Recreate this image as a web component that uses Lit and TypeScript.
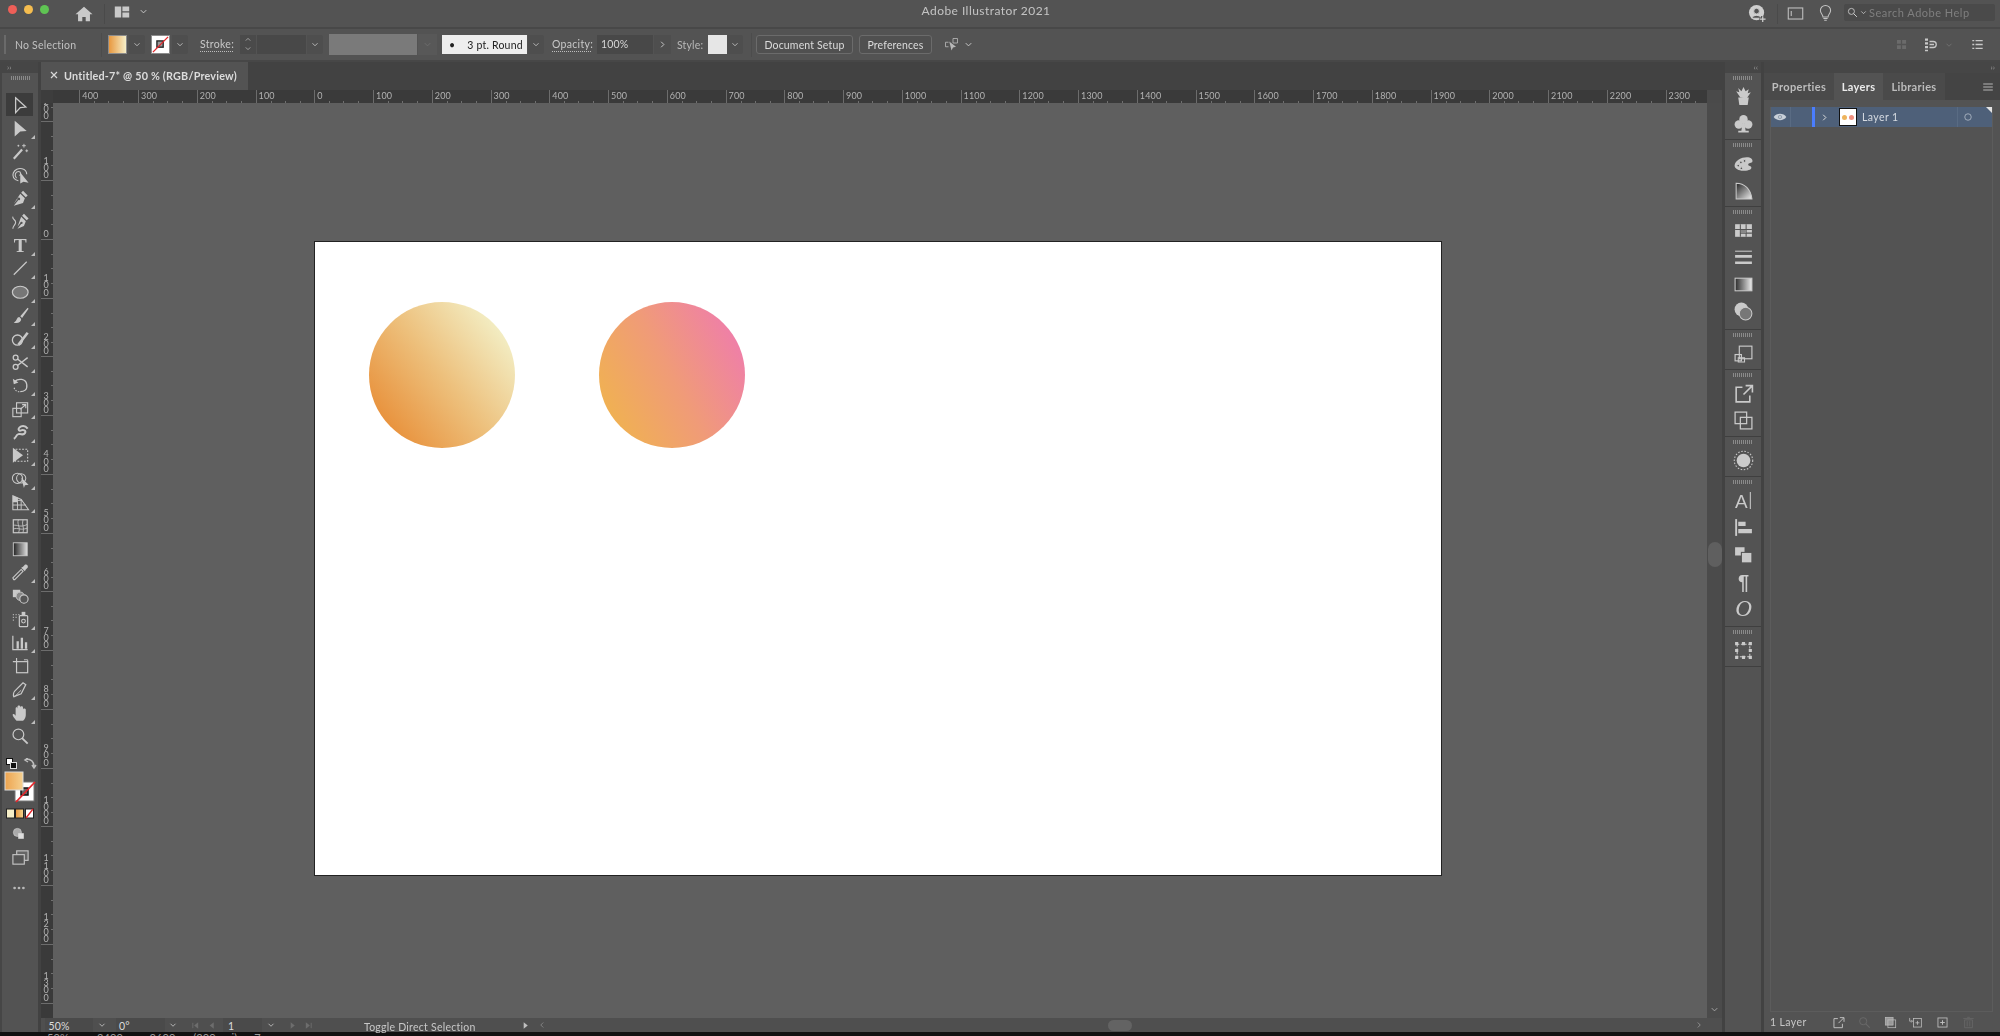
import { LitElement, html, css, svg } from 'lit';
import { customElement } from 'lit/decorators.js';

const cc = 'currentColor';

// all icons are drawn on a 20x20 box
const I: Record<string, unknown> = {
  select: svg`<path d="M5 2l11 10-6 .6L5 18z" fill="none" stroke-width="1.4"/>`,
  direct: svg`<path d="M4 2l13 11-7 .5L4 19z" fill=${cc} stroke="none"/>`,
  wand: svg`<path d="M3 18L12 8" stroke-width="2.4"/><path d="M14 2v4M12 4h4M17 8v3M15.5 9.5h3M8 3v2M7 4h2" stroke-width="1"/>`,
  curve: svg`<path d="M8 16C3 15 1 11 2.500 7.500S8 2 12 3s5 4 5 6" stroke-width="1.200"/><path d="M6 13C3 10 5 6 8 6s3 4 1 4" stroke-width="1.200"/><path d="M10 7l9 11-5.500-1L10 19z" fill=${cc} stroke="none"/>`,
  pen: svg`<path d="M13 2l5 5-2 2-5-5zM10 5l5 5-2 5-10 3 5-6a1.500 1.500 0 1 0-1-1L3 16z" fill=${cc} stroke="none"/>`,
  curvePen: svg`<path d="M14 2l5 5-2 2-5-5zM11 5l5 5-2 5-7 3 4-5a1.300 1.300 0 1 0-1-1l-3 4z" fill=${cc} stroke="none"/><path d="M2 5c-1 3 3 3 3 6s-3 4-3 7" stroke-width="1.200"/>`,
  type: svg`<text x="10" y="17" text-anchor="middle" class="gl serif-b" font-size="21">T</text>`,
  line: svg`<path d="M3 17L17 3" stroke-width="1.300"/>`,
  ellipse: svg`<ellipse cx="10" cy="10" rx="8.500" ry="6.500" fill="#777" stroke-width="1.300"/>`,
  brush: svg`<path d="M18 2l-8 9 2 2 7-10zM9 12c-3 0-2 4-6 6 4 1 8 0 8-4z" fill=${cc} stroke="none"/>`,
  shaper: svg`<circle cx="7" cy="12" r="5.500" stroke-width="1.400"/><path d="M18 4L8 17" stroke-width="2.800"/>`,
  scissors: svg`<circle cx="5" cy="5" r="2.600" stroke-width="1.400"/><circle cx="5" cy="15" r="2.600" stroke-width="1.400"/><path d="M7 6.500L18 15M7 13.500L18 5" stroke-width="1.500"/>`,
  rotate: svg`<path d="M4 6c4-4 12-3 13 3s-3 8-7 8" stroke-width="1.400"/><path d="M2 3l1 6 5-2z" fill=${cc} stroke="none"/><path d="M9 17c-3 0-5-2-6-5" stroke-width="1.200" stroke-dasharray="1.500 1.500"/>`,
  scale: svg`<rect x="2" y="9" width="9" height="9" stroke-width="1.200"/><rect x="6" y="3" width="12" height="11" stroke-width="1.200"/><path d="M10 10l6-5M12 5h4v4" stroke-width="1.200"/>`,
  warp: svg`<path d="M3 17c3-1 2-4 5-5s5 2 7-1-2-4-4-3-4-1-2-3 6-3 9 1" stroke-width="2.200"/>`,
  free: svg`<path d="M2 2l11 8-11 8z" fill=${cc} stroke="none"/><rect x="5" y="3.500" width="13" height="13" stroke-width="1.200" stroke-dasharray="2 1.500"/>`,
  builder: svg`<circle cx="7" cy="9" r="5.500" stroke-width="1.100"/><circle cx="11" cy="9" r="5" stroke-width="1.100"/><path d="M11 8l8 8-4 .5-1 3z" fill=${cc} stroke="none"/>`,
  persp: svg`<path d="M2 3l9 4 8 11H2z" stroke-width="1.100"/><path d="M2 8h10M2 13h14M7 5v13M11 7v11" stroke-width="1"/><path d="M2 3l5 2v5H2z" fill=${cc} stroke="none"/>`,
  mesh: svg`<rect x="2.500" y="3" width="15" height="14" stroke-width="1.300"/><path d="M2.500 9c4-1 8 3 15-1M2.500 13c5-2 8 2 15-1M8 3c-2 5 3 9 0 14M13 3c-2 5 2 9 0 14" stroke-width=".9"/>`,
  gradient: svg`<defs><linearGradient id="tg"><stop offset="0" stop-color="#222"/><stop offset="1" stop-color="#ddd"/></linearGradient></defs><rect x="2.500" y="3" width="15" height="14" fill="url(#tg)" stroke-width="1"/>`,
  dropper: svg`<path d="M3 18l-1-2 9-9 2 2-9 9z" stroke-width="1.200"/><path d="M11 5l2-1 2-2c2-1 4 1 3 3l-2 2-1 2z" fill=${cc} stroke="none"/>`,
  blend: svg`<rect x="2" y="3" width="8" height="8" fill=${cc} stroke="none"/><circle cx="10" cy="10" r="4.500" fill="#888" stroke-width="1"/><circle cx="14" cy="13" r="4.500" fill="#555" stroke-width="1.200"/>`,
  spray: svg`<rect x="9" y="6" width="9" height="12" rx="1" stroke-width="1.300"/><rect x="11.500" y="2" width="4" height="4" fill=${cc} stroke="none"/><circle cx="13.500" cy="12" r="2" stroke-width="1.200"/><path d="M2 5h1M5 5h1M2 8h1M5 8h1M8 5h1M2 11h1" stroke-width="1.300"/>`,
  graph: svg`<path d="M2 3v15h16" stroke-width="1.300"/><path d="M6 9h2.500v8H6zM10.500 5H13v12h-2.500zM15 10h2.500v7H15z" fill=${cc} stroke="none"/>`,
  artboard: svg`<path d="M6 1v4M2 5h4" stroke-width="1.200"/><rect x="6" y="5" width="12" height="12" stroke-width="1.300"/><path d="M14 3h4v2" stroke-width="1"/>`,
  slice: svg`<path d="M3 18c-1-2 0-5 1-6l9-9 3 2-5 10z" stroke-width="1.300"/><path d="M4 18l7-7" stroke-width="1"/>`,
  hand: svg`<path d="M6 18c-2-2-5-6-4-7s3 1 3 2V5c0-2 2-2 2 0V3c0-2 3-2 3 0v1c0-2 3-2 3 0v2c0-2 3-1 3 0v6c0 3-2 6-3 6z" fill=${cc} stroke="none"/>`,
  zoom: svg`<circle cx="8" cy="8" r="5.800" stroke-width="1.300"/><path d="M12 12l6 6" stroke-width="2"/>`,
  drawMode: svg`<circle cx="8" cy="8" r="5" fill="#aaa" stroke-width="1"/><rect x="9" y="9" width="7" height="7" fill="#ddd" stroke="none"/>`,
  screen: svg`<rect x="6" y="3" width="12" height="10" fill="#666" stroke-width="1.200"/><rect x="2" y="7" width="12" height="10" fill="#555" stroke-width="1.200"/>`,
  more: svg`<circle cx="4.500" cy="10" r="1.700" fill=${cc} stroke="none"/><circle cx="10" cy="10" r="1.700" fill=${cc} stroke="none"/><circle cx="15.500" cy="10" r="1.700" fill=${cc} stroke="none"/>`,

  brushes: svg`<path d="M5 11h10l-1 7H6z" fill=${cc} stroke="none"/><path d="M7 11L3 5l3 1-1-4 3 3 2-4 2 4 3-2-1 4 3-1-4 6z" fill=${cc} stroke="none"/>`,
  club: svg`<circle cx="10" cy="6" r="4" fill=${cc} stroke="none"/><circle cx="5.500" cy="11" r="4" fill=${cc} stroke="none"/><circle cx="14.500" cy="11" r="4" fill=${cc} stroke="none"/><path d="M9 9h2l1 8h3v1.500H5V17h3z" fill=${cc} stroke="none"/>`,
  palette: svg`<path d="M1.500 12C2 7 8 4 13 4c4 0 6 2 5.500 4s-4 1-4 3 3 1 3 3-4 3-8 3-8-2-8-5z" fill=${cc} stroke="none"/><circle cx="5" cy="12" r="1.300" fill="#555"/><circle cx="8" cy="14.500" r="1.300" fill="#555"/><circle cx="7.500" cy="9" r="1.300" fill="#555"/><circle cx="11" cy="7.500" r="1.300" fill="#555"/>`,
  quarter: svg`<defs><linearGradient id="qg" x1="0" y1="0" x2="1" y2="1"><stop offset="0" stop-color="#222"/><stop offset="1" stop-color="#eee"/></linearGradient></defs><path d="M3 3c8 0 14 6 15 15H3z" fill="url(#qg)" stroke-width="1"/>`,
  table: svg`<rect x="2" y="4" width="16" height="12" fill=${cc} stroke="none"/><path d="M2 9h16M7 4v12M12.500 4v12M7 12.500h11" stroke="#555" stroke-width="1"/><rect x="7.500" y="9.500" width="5" height="3" fill="#888" stroke="none"/>`,
  lines: svg`<path d="M2 4h16" stroke-width="1"/><path d="M2 9h16M2 15h16" stroke-width="2.600"/>`,
  gradBox: svg`<defs><linearGradient id="bg"><stop offset="0" stop-color="#2a2a2a"/><stop offset="1" stop-color="#eee"/></linearGradient></defs><rect x="2" y="4" width="16" height="12" fill="url(#bg)" stroke-width="1"/>`,
  transp: svg`<circle cx="8" cy="8" r="6.500" fill=${cc} stroke="none"/><circle cx="12" cy="12" r="6" fill="#777" stroke-width="1"/>`,
  transform: svg`<rect x="6" y="3" width="12" height="12" stroke-width="1.100"/><rect x="2" y="11" width="6" height="6" stroke-width="1.100"/><path d="M5 14h6v4H5z" stroke-width="1"/>`,
  export: svg`<path d="M9 4H3v14h13v-6" stroke-width="1.500"/><path d="M10 11l8-8M12 2.500h6.500V9" stroke-width="1.500"/>`,
  path: svg`<rect x="2" y="2" width="11" height="11" stroke-width="1.200"/><rect x="7" y="7" width="11" height="11" stroke-width="1.200"/>`,
  sun: svg`<circle cx="10" cy="10" r="6.500" fill=${cc} stroke="none"/><circle cx="10" cy="10" r="8.800" stroke-width="1" stroke-dasharray="1.500 1.500"/>`,
  charA: svg`<text x="8" y="17" text-anchor="middle" class="gl sans" font-size="18">A</text><path d="M16.500 2v16" stroke-width="1"/>`,
  align: svg`<path d="M3 2v16" stroke-width="1.800"/><path d="M5 4.500h7v4H5zM5 11.500h13v4H5z" fill=${cc} stroke="none"/>`,
  stack: svg`<path d="M2 3h9v5h3v6H8v-3H2z" fill=${cc} stroke="none"/><rect x="8" y="8" width="10" height="10" fill=${cc} stroke="#555"/>`,
  para: svg`<text x="10" y="17" text-anchor="middle" class="gl sans-b" font-size="19">¶</text>`,
  italicO: svg`<text x="10" y="17" text-anchor="middle" class="gl serif-i" font-size="22">O</text>`,
  nodes: svg`<rect x="4" y="4" width="12" height="12" stroke-width="1" stroke-dasharray="2 1.500"/><path d="M2 2h3v3H2zM8.500 2h3v3h-3zM15 2h3v3h-3zM2 8.500h3v3H2zM15 8.500h3v3h-3zM2 15h3v3H2zM8.500 15h3v3h-3zM15 15h3v3h-3z" fill=${cc} stroke="none"/>`,

  chevD: svg`<path d="M5 7.500l5 5 5-5" stroke-width="1.700"/>`,
  chevU: svg`<path d="M5 12.500l5-5 5 5" stroke-width="1.700"/>`,
  chevR: svg`<path d="M7.500 5l5 5-5 5" stroke-width="1.700"/>`,
  chevL: svg`<path d="M12.500 5l-5 5 5 5" stroke-width="1.700"/>`,
  triR: svg`<path d="M6 3l9 7-9 7z" fill=${cc} stroke="none"/>`,
  first: svg`<path d="M4 4v12" stroke-width="2"/><path d="M16 3l-9 7 9 7z" fill=${cc} stroke="none"/>`,
  prev: svg`<path d="M15 3l-9 7 9 7z" fill=${cc} stroke="none"/>`,
  last: svg`<path d="M16 4v12" stroke-width="2"/><path d="M4 3l9 7-9 7z" fill=${cc} stroke="none"/>`,
  home: svg`<path d="M10 2L0 11h3v8h5v-5h4v5h5v-8h3z" fill=${cc} stroke="none"/>`,
  layout: svg`<path d="M1 3h8v14H1zM10.500 3H19v6h-8.500zM10.500 10.500H19V17h-8.500z" fill=${cc} stroke="none"/>`,
  user: svg`<circle cx="9" cy="9" r="8" fill=${cc} stroke="none"/><circle cx="9" cy="7.500" r="3" fill="#535353"/><path d="M4 15c1-4 9-4 10 0z" fill="#535353"/><path d="M15.500 12.500v7M12 16h7" stroke="#535353" stroke-width="3.500"/><path d="M15.500 13v6M12.500 16h6" stroke-width="1.300"/>`,
  panelBox: svg`<rect x="1.500" y="3.500" width="17" height="13" stroke-width="1.300"/><path d="M5 7v6" stroke-width="1.300"/>`,
  bulb: svg`<path d="M7 14c0-3-3-4-3-7.500a6 6 0 0 1 12 0C16 10 13 11 13 14z" stroke-width="1.200"/><path d="M7.500 16h5M8.500 18h3" stroke-width="1.200"/>`,
  search: svg`<circle cx="8" cy="8" r="5.500" stroke-width="1.500"/><path d="M12 12l6 6" stroke-width="1.800"/>`,
  pick: svg`<path d="M2 7h4M2 13h4M2 7v6M12 2h6v6h-6z" stroke-width="1.100"/><path d="M7 6l9 7-4 1-2 4z" fill=${cc} stroke="none"/>`,
  grid: svg`<path d="M3 3h6v6H3zM11 3h6v6h-6zM3 11h6v6H3zM11 11h6v6h-6z" fill=${cc} stroke="none"/>`,
  arrange: svg`<path d="M2 2h4v3H2zM2 7h4v3H2zM2 12h4v3H2zM2 17h4v2H2z" fill=${cc} stroke="none"/><path d="M8 6h5a4 4 0 0 1 0 8H8M8 10h6" stroke-width="1.700"/>`,
  list: svg`<path d="M2 4h3M2 10h3M2 16h3M7 4h11M7 10h11M7 16h11" stroke-width="2"/>`,
  menu: svg`<path d="M2 5h16M2 10h16M2 15h16" stroke-width="1.800"/>`,
  eye: svg`<path d="M1 10c4-6 14-6 18 0-4 6-14 6-18 0z" fill=${cc} stroke="none"/><circle cx="10" cy="10" r="3" fill="#4d6078"/><circle cx="10" cy="10" r="1.500" fill=${cc}/>`,
  target: svg`<circle cx="10" cy="10" r="6.500" stroke-width="1.300"/>`,
  newLayer: svg`<rect x="3" y="3" width="14" height="14" stroke-width="1.300"/><path d="M10 6.500v7M6.500 10h7" stroke-width="1.500"/>`,
  sublayer: svg`<rect x="7" y="4" width="12" height="13" stroke-width="1.200"/><path d="M13 7.500v6M10 10.500h6" stroke-width="1.300"/><path d="M1 3v5h4M3.500 6L5.500 8l-2 2" stroke-width="1.200"/>`,
  mask: svg`<rect x="2" y="2" width="12" height="12" fill="#999" stroke-width="1"/><rect x="6" y="6" width="12" height="12" stroke-width="1.100"/>`,
  trash: svg`<path d="M4 6h12v12H4zM2 4h16M8 2h4M8 8v8M12 8v8" stroke-width="1.200"/>`,
};

const ic = (name: string) => html`<svg class="ic" viewBox="0 0 20 20">${I[name]}</svg>`;

const TOOLS: [string, boolean][] = [
  ['select', false], ['direct', true], ['wand', false], ['curve', false], ['pen', true], ['curvePen', false],
  ['type', true], ['line', true], ['ellipse', true], ['brush', true], ['shaper', true], ['scissors', true],
  ['rotate', true], ['scale', true], ['warp', true], ['free', true], ['builder', true], ['persp', true],
  ['mesh', false], ['gradient', false], ['dropper', true], ['blend', false], ['spray', true], ['graph', true],
  ['artboard', false], ['slice', true], ['hand', true], ['zoom', false],
];

const DOCK: string[][] = [
  ['brushes', 'club'],
  ['palette', 'quarter'],
  ['table', 'lines', 'gradBox', 'transp'],
  ['transform'],
  ['export', 'path'],
  ['sun'],
  ['charA', 'align', 'stack', 'para', 'italicO'],
  ['nodes'],
];

const H_LABELS = Array.from({ length: 28 }, (_, i) => Math.abs(i * 100 - 400));
const V_LABELS = Array.from({ length: 16 }, (_, i) => Math.abs(i * 100 - 200));

@customElement('app-root')
export class AppRoot extends LitElement {
  static styles = css`
    :host {
      display: block;
      width: 2000px;
      height: 1036px;
      overflow: hidden;
      background: #424242;
      color: #cdcdcd;
      font-family: Lato, "Noto Sans", "Liberation Sans", sans-serif;
      font-size: 10.5px;
      letter-spacing: .15px;
    }
    * { box-sizing: border-box; }
    .ic {
      display: block;
      width: 100%;
      height: 100%;
      fill: none;
      stroke: currentColor;
      overflow: visible;
    }
    .gl { fill: currentColor; stroke: none; letter-spacing: 0; }
    .serif-b { font-family: "Liberation Serif", serif; font-weight: 700; }
    .serif-i { font-family: "Liberation Serif", serif; font-style: italic; }
    .sans { font-family: "Liberation Sans", sans-serif; }
    .sans-b { font-family: "Liberation Sans", sans-serif; font-weight: 700; }
    .soft { filter: blur(.35px); }

    /* title bar */
    .titlebar {
      height: 27px;
      background: #535353;
      display: flex;
      align-items: center;
      position: relative;
    }
    .lights { display: flex; gap: 7px; margin: -8px 0 0 8px; }
    .light { width: 9px; height: 9px; border-radius: 50%; }
    .red { background: #ee5f58; }
    .yellow { background: #f5bd4f; }
    .green { background: #5fc453; }
    .home { width: 18px; height: 17px; margin-left: 26px; color: #c9c9c9; }
    .tsep { width: 1px; height: 20px; background: #4a4a4a; margin-left: 11px; }
    .layout { width: 18px; height: 16px; margin-left: 8px; margin-top: -4px; color: #c9c9c9; }
    .tchev { width: 11px; height: 11px; margin-left: 7px; margin-top: -4px; }
    .apptitle {
      position: absolute;
      left: 0;
      right: 0;
      top: 3px;
      text-align: center;
      font-size: 12px;
      letter-spacing: .45px;
      padding-right: 28px;
      color: #c4c4c4;
    }
    .tright { margin-left: auto; display: flex; align-items: center; height: 100%; }
    .user { width: 19px; height: 19px; color: #cfcfcf; }
    .tsep2 { width: 1px; height: 20px; background: #4a4a4a; margin: 0 9px 0 10px; }
    .pbox { width: 17px; height: 17px; color: #bdbdbd; }
    .bulb { width: 17px; height: 19px; margin: 0 10px 0 13px; color: #c4c4c4; }
    .searchbox {
      width: 151px;
      height: 17px;
      margin: -3px 5px 0 0;
      background: #4a4a4a;
      border-radius: 2px;
      display: flex;
      align-items: center;
      padding-left: 3px;
      color: #7f7f7f;
      font-size: 11px;
      letter-spacing: .5px;
      white-space: nowrap;
    }
    .sicon { width: 11px; height: 11px; color: #cfcfcf; flex: none; }
    .schev { width: 9px; height: 9px; color: #cfcfcf; margin: 0 1px 0 1px; flex: none; }

    /* control bar */
    .controlbar {
      height: 35px;
      border-top: 2px solid #484848;
      border-bottom: 2px solid #474747;
      background: #535353;
      display: flex;
      align-items: center;
      white-space: nowrap;
    }
    .grip-v { width: 2px; height: 19px; background: #6a6a6a; margin-left: 4px; flex: none; }
    .nosel { width: 86px; margin-left: 9px; color: #c0c0c0; letter-spacing: .2px; flex: none; }
    .sep { width: 1px; height: 24px; background: #4c4c4c; flex: none; }
    .swatch {
      width: 19px;
      height: 19px;
      border: 1px solid #8c8c8c;
      flex: none;
    }
    .fillsw { margin-left: 6px; background: linear-gradient(90deg, #e8983f, #f6efc8); }
    .strokesw { margin-left: 6px; background: #fff; padding: 0; }
    .dd {
      width: 16px;
      height: 19px;
      margin-left: 2px;
      background: #4e4e4e;
      border-radius: 0 2px 2px 0;
      padding: 4px 3px;
      color: #c8c8c8;
      flex: none;
    }
    .lbl { color: #c8c8c8; border-bottom: 1px dotted #bdbdbd; line-height: 13px; flex: none; letter-spacing: .3px; }
    .lbl-stroke { margin-left: 12px; width: 33px; }
    .spin { width: 16px; height: 19px; margin-left: 7px; background: #4a4a4a; display: flex; flex-direction: column; align-items: center; color: #bbb; flex: none; }
    .spin span { width: 10px; height: 9px; display: block; }
    .sfield { width: 49px; height: 19px; margin-left: 1px; background: #484848; flex: none; }
    .dd-tight { margin-left: 1px; }
    .graybox { width: 88px; height: 21px; margin-left: 6px; background: #7a7a7a; flex: none; }
    .dd-off { width: 19px; height: 21px; margin-left: 1px; background: #585858; color: #6d6d6d; padding: 5px 4px; flex: none; }
    .whitebox {
      width: 85px;
      height: 19px;
      margin-left: 5px;
      background: #eeeeee;
      color: #222;
      display: flex;
      align-items: center;
      padding-left: 7px;
      gap: 12px;
      letter-spacing: .2px;
      flex: none;
    }
    .dd-white { margin-left: 1px; }
    .lbl-op { margin-left: 8px; width: 39px; }
    .opfield {
      width: 56px;
      height: 19px;
      margin-left: 6px;
      background: #484848;
      padding-left: 4px;
      line-height: 19px;
      color: #d6d6d6;
      flex: none;
    }
    .opgo { width: 17px; height: 19px; margin-left: 1px; background: #4e4e4e; padding: 4px 3px; flex: none; }
    .style-l { margin-left: 6px; width: 25px; color: #b8b8b8; flex: none; }
    .stylesw { width: 19px; height: 19px; margin-left: 6px; background: #e6e6e6; flex: none; }
    .dd-style { margin-left: 0; }
    .sep2 { width: 1px; height: 24px; background: #4c4c4c; margin-left: 8px; flex: none; }
    .btn {
      height: 19px;
      border: 1px solid #6b6b6b;
      border-radius: 3px;
      background: #505050;
      color: #dcdcdc;
      display: flex;
      align-items: center;
      justify-content: center;
      flex: none;
    }
    .btn-doc { width: 97px; margin-left: 4px; }
    .btn-pref { width: 73px; margin-left: 6px; }
    .pick { width: 15px; height: 15px; margin-left: 12px; color: #b8b8b8; flex: none; }
    .pchev { width: 11px; height: 11px; margin-left: 4px; flex: none; }
    .cright { margin-left: auto; display: flex; align-items: center; }
    .cgrid { width: 13px; height: 13px; color: #6b6b6b; }
    .carr { width: 16px; height: 15px; margin-left: 15px; color: #c8c8c8; }
    .cchev { width: 10px; height: 10px; margin-left: 5px; color: #747474; }
    .clist { width: 13px; height: 13px; margin: 0 16px 0 17px; color: #c8c8c8; }

    /* work area */
    .work { height: 970px; display: flex; background: #424242; }
    .tools { width: 38px; margin-right: 3px; background: #535353; display: flex; flex-direction: column; flex: none; position: relative; border-left: 2px solid #464646; }
    .tools-head { height: 11px; background: #464646; color: #9a9a9a; font-size: 8px; line-height: 10px; padding-left: 5px; letter-spacing: 0; flex: none; }
    .grip { height: 4px; background: repeating-linear-gradient(90deg, #8a8a8a 0 1px, transparent 1px 2px); flex: none; }
    .tools .grip { width: 19px; margin: 3px auto 13px; }
    .tool {
      height: 23.4px;
      width: 100%;
      flex: none;
      position: relative;
      padding: 2.5px 0 2.5px 9px;
      color: #c9c9c9;
    }
    .tool .ic { width: 18.5px; height: 18.5px; }
    .tool.on { background: linear-gradient(#3c3c3c, #3c3c3c) 4px 0 / 27px 100% no-repeat; }
    .tool.fly::after {
      content: "";
      position: absolute;
      left: 29px;
      bottom: 1px;
      border-style: solid;
      border-width: 0 0 4px 4px;
      border-color: transparent transparent #bdbdbd transparent;
    }
    .swaps { width: 36px; height: 50px; margin-top: 10px; flex: none; }
    .swaps svg { display: block; }
    .strip-sw { flex: none; }
    .strip-sw svg { display: block; }
    .mini { height: 23px; padding: 3px 0 3px 9px; color: #c4c4c4; flex: none; }
    .mini .ic { width: 16px; height: 16px; }
    .mini.first { margin-top: 4px; }
    .mini.screen .ic { width: 19px; height: 19px; margin-top: -1px; }
    .mini.dots { margin-top: 8px; color: #b9b9b9; }

    .doc { width: 1681px; display: flex; flex-direction: column; flex: none; }
    .tabs { height: 28px; flex: none; }
    .tab {
      width: 207px;
      height: 100%;
      background: #535353;
      display: flex;
      align-items: center;
      padding-bottom: 2px;
      font-size: 10.8px;
      font-weight: 700;
      color: #dcdcdc;
      letter-spacing: .2px;
      white-space: nowrap;
    }
    .close { width: 10px; height: 10px; margin: 0 5px 0 8px; stroke: #d8d8d8; fill: none; flex: none; }
    .rulerrow { height: 13px; display: flex; flex: none; }
    .corner { width: 12px; background: #3d3d3d; flex: none; }
    .hruler {
      width: 1654px;
      background-color: #3a3a3a;
      overflow: hidden;
      display: flex;
      flex: none;
      padding-left: 26.3px;
    }
    .hcell {
      width: 58.75px;
      flex: none;
      border-left: 1px solid #6c6c6c;
      padding-left: 2px;
      font-size: 9px;
      line-height: 11px;
      color: #b2b2b2;
      letter-spacing: .15px;
      background: repeating-linear-gradient(90deg, transparent 0 13.700px, #707070 13.700px 14.690px) 0 100% / 100% 2px no-repeat;
    }
    .sb-corner { width: 15px; background: #4a4a4a; flex: none; }
    .middle { height: 915px; display: flex; flex: none; }
    .vruler {
      width: 12px;
      background: #3a3a3a;
      overflow: hidden;
      flex: none;
    }
    .vtrack { margin-top: -39.300px; }
    .vcell {
      height: 58.75px;
      border-bottom: 1px solid #6c6c6c;
      display: flex;
      flex-direction: column;
      justify-content: flex-end;
      padding: 0 0 2px 1px;
      background: repeating-linear-gradient(180deg, transparent 0 13.700px, #707070 13.700px 14.690px) 100% 0 / 2px 100% no-repeat;
    }
    .vcell span { display: block; width: 8px; font-size: 9px; line-height: 7.200px; text-align: center; color: #b2b2b2; letter-spacing: 0; }
    .canvas { width: 1654px; background: #5f5f5f; position: relative; flex: none; }
    .artboard {
      position: absolute;
      left: 261px;
      top: 138px;
      width: 1128px;
      height: 635px;
      background: #fff;
      border: 1px solid #222;
    }
    .circle { position: absolute; top: 60px; width: 146px; height: 146px; border-radius: 50%; }
    .c1 { left: 54px; background: linear-gradient(52deg, #e8903a 12%, #edc07c 50%, #f3efc6 88%); }
    .c2 { left: 284px; background: linear-gradient(62deg, #f0b152 12%, #f09b78 50%, #ef7fa8 88%); }
    .vscroll {
      width: 15px;
      background: #4b4b4b;
      display: flex;
      flex-direction: column;
      align-items: center;
      flex: none;
      color: #a8a8a8;
    }
    .varrow { width: 11px; height: 11px; flex: none; }
    .vscroll .top { margin-top: -9px; }
    .thumb-v { width: 14px; height: 25px; border-radius: 7px; background: #5f5f5f; margin-top: 437px; flex: none; }
    .vscroll .bot { margin-top: auto; margin-bottom: 3px; }

    .status { height: 14px; display: flex; align-items: center; flex: none; color: #c4c4c4; background: #4f4f4f; white-space: nowrap; }
    .sf { height: 100%; background: #4a4a4a; flex: none; line-height: 17px; color: #dcdcdc; }
    .sf-zoom { width: 48px; margin-left: 4px; padding-left: 3.500px; }
    .sf-rot { width: 49px; margin-left: 9px; padding-left: 3px; }
    .sf-page { width: 39px; margin-left: 7.500px; padding-left: 5px; }
    .schv { width: 10px; height: 10px; margin-left: 4px; flex: none; color: #c4c4c4; }
    .schv-2 { margin-left: 3px; }
    .schv-3 { margin-left: 3.500px; }
    .snav { width: 9px; height: 9px; flex: none; color: #6d6d6d; margin-left: 7px; }
    .snav-1 { margin-left: 12.500px; }
    .snav-2 { margin-left: 12px; }
    .hint { width: 110px; text-align: center; flex: none; margin-left: 51.500px; margin-top: 3px; color: #c8c8c8; letter-spacing: .25px; }
    .stri { width: 9px; height: 9px; flex: none; margin-left: 46.500px; color: #c0c0c0; }
    .hleft { width: 10px; height: 10px; flex: none; margin-left: 7px; color: #8a8a8a; }
    .hthumb { width: 24px; height: 11px; border-radius: 6px; background: #636363; margin-left: 561.500px; flex: none; }
    .hright { width: 10px; height: 10px; flex: none; margin-left: auto; margin-right: 18px; color: #9a9a9a; }

    /* dock */
    .dock { width: 36px; margin-left: 3px; background: #535353; flex: none; display: flex; flex-direction: column; }
    .dock-head { height: 11px; background: #464646; color: #9a9a9a; font-size: 8px; line-height: 10px; text-align: right; padding-right: 3px; letter-spacing: 0; flex: none; }
    .group { border-bottom: 1px solid #3f3f3f; padding-bottom: 2px; flex: none; display: flex; flex-direction: column; align-items: center; color: #cacaca; }
    .group.tall { padding-bottom: 4px; }
    .group .grip { width: 20px; margin: 3px 0; }
    .dk { width: 27px; height: 27px; padding: 3px; flex: none; }

    /* panel */
    .panel { width: 236px; margin-left: 3px; background: #535353; flex: none; display: flex; flex-direction: column; }
    .panel-head { height: 11px; background: #464646; color: #9a9a9a; font-size: 8px; line-height: 10px; text-align: right; padding-right: 5px; letter-spacing: 0; flex: none; }
    .ptabs { height: 27px; display: flex; background: #444; flex: none; font-size: 11px; font-weight: 700; letter-spacing: .35px; color: #bdbdbd; }
    .ptab { background: #4a4a4a; display: flex; align-items: center; justify-content: center; height: 100%; flex: none; padding-bottom: 1px; }
    .ptab.on { background: #535353; color: #ececec; }
    .pt-prop { width: 70px; }
    .pt-lay { width: 49px; }
    .pt-lib { width: 62px; }
    .pmenu { width: 12px; height: 12px; margin: 8px 6px 0 auto; color: #b4b4b4; flex: none; }
    .pbody { flex: 1; padding: 7px 7px 0 6px; display: flex; flex-direction: column; }
    .pbox-list { height: 905px; border: 1px solid #5c5c5c; border-top: 0; flex: none; }
    .layer { height: 20px; background: #4e6079; display: flex; align-items: center; position: relative; color: #d6dbe2; }
    .layer::after {
      content: "";
      position: absolute;
      right: 0;
      top: 0;
      border-style: solid;
      border-width: 0 6px 6px 0;
      border-color: transparent #e4e4e4 transparent transparent;
    }
    .leye { width: 14px; height: 14px; margin-left: 2px; color: #c9d0d9; flex: none; }
    .ldiv { width: 1px; height: 100%; background: #596b83; flex: none; }
    .ldiv-1 { margin-left: 3px; }
    .lbar { width: 3px; height: 100%; background: #4a7dff; margin-left: 21px; flex: none; }
    .lchev { width: 11px; height: 11px; margin-left: 4px; flex: none; color: #e2e2e2; }
    .lthumb {
      width: 18px;
      height: 18px;
      margin-left: 9px;
      background: #fff;
      border: 1px solid #111;
      display: flex;
      align-items: center;
      justify-content: center;
      gap: 2px;
      flex: none;
    }
    .lthumb i { display: block; width: 5px; height: 5px; border-radius: 50%; }
    .lthumb i:first-child { background: #eeb45c; }
    .lthumb i:last-child { background: #ef8f7f; }
    .lname { margin-left: 5px; width: 95px; flex: none; letter-spacing: .4px; }
    .ltarget { width: 10px; height: 10px; margin-left: 5px; flex: none; color: #cbd2db; }
    .pfoot { height: 20px; display: flex; align-items: center; flex: none; color: #c8c8c8; }
    .pcount { width: 62px; letter-spacing: .4px; flex: none; }
    .fi { width: 13px; height: 13px; flex: none; color: #bfbfbf; margin-left: 13px; }
    .fi.off { color: #696969; }
    .fi.first { margin-left: 0; }
    .fi.wide { width: 15px; margin-left: 11px; }

    .strip {
      height: 4px;
      background: #111;
      overflow: hidden;
      display: flex;
      color: #9a9a9a;
      font-size: 11px;
      line-height: 11px;
      white-space: pre;
      padding-left: 47px;
    }
    .strip span:first-child { margin-right: 28px; }
    .strip span:last-child { margin-left: 17px; }
  `;

  render() {
    return html`
      <div class="titlebar soft">
        <div class="lights"><div class="light red"></div><div class="light yellow"></div><div class="light green"></div></div>
        <div class="home">${ic('home')}</div>
        <div class="tsep"></div>
        <div class="layout">${ic('layout')}</div>
        <div class="tchev">${ic('chevD')}</div>
        <div class="apptitle">Adobe Illustrator 2021</div>
        <div class="tright">
          <div class="user">${ic('user')}</div>
          <div class="tsep2"></div>
          <div class="pbox">${ic('panelBox')}</div>
          <div class="bulb">${ic('bulb')}</div>
          <div class="searchbox">
            <div class="sicon">${ic('search')}</div><div class="schev">${ic('chevD')}</div>Search Adobe Help
          </div>
        </div>
      </div>

      <div class="controlbar soft">
        <div class="grip-v"></div>
        <div class="nosel">No Selection</div>
        <div class="sep"></div>
        <div class="swatch fillsw"></div>
        <div class="dd">${ic('chevD')}</div>
        <div class="swatch strokesw">
          <svg viewBox="0 0 19 19" class="ic">
            <rect x="5.500" y="5.500" width="7" height="7" fill="#999" stroke="#222" stroke-width="1.500"></rect>
            <path d="M1 18L18 1" stroke="#e5252a" stroke-width="1.500"></path>
          </svg>
        </div>
        <div class="dd">${ic('chevD')}</div>
        <div class="lbl lbl-stroke">Stroke:</div>
        <div class="spin"><span>${ic('chevU')}</span><span>${ic('chevD')}</span></div>
        <div class="sfield"></div>
        <div class="dd dd-tight">${ic('chevD')}</div>
        <div class="graybox"></div>
        <div class="dd-off">${ic('chevD')}</div>
        <div class="whitebox"><span>•</span><span>3 pt. Round</span></div>
        <div class="dd dd-white">${ic('chevD')}</div>
        <div class="lbl lbl-op">Opacity:</div>
        <div class="opfield">100%</div>
        <div class="opgo">${ic('chevR')}</div>
        <div class="style-l">Style:</div>
        <div class="stylesw"></div>
        <div class="dd dd-style">${ic('chevD')}</div>
        <div class="sep2"></div>
        <div class="btn btn-doc">Document Setup</div>
        <div class="btn btn-pref">Preferences</div>
        <div class="pick">${ic('pick')}</div>
        <div class="pchev">${ic('chevD')}</div>
        <div class="cright">
          <div class="cgrid">${ic('grid')}</div>
          <div class="carr">${ic('arrange')}</div>
          <div class="cchev">${ic('chevD')}</div>
          <div class="clist">${ic('list')}</div>
        </div>
      </div>

      <div class="work">
        <aside class="tools soft">
          <div class="tools-head">››</div>
          <div class="grip"></div>
          ${TOOLS.map(([name, fly], i) => html`
            <div class="tool ${fly ? 'fly' : ''} ${i === 0 ? 'on' : ''}">${ic(name)}</div>
          `)}
          <div class="swaps">
            <svg width="36" height="48" viewBox="0 0 36 48">
              <defs>
                <linearGradient id="fillg"><stop offset="0" stop-color="#eda34e"></stop><stop offset="1" stop-color="#f5d08f"></stop></linearGradient>
                <linearGradient id="stripg"><stop offset="0" stop-color="#e8983f"></stop><stop offset="1" stop-color="#f3d48e"></stop></linearGradient>
              </defs>
              <rect x="4.500" y="0.500" width="6" height="6" fill="#fff" stroke="#111"></rect>
              <rect x="8.500" y="4.500" width="6" height="6" fill="#111" stroke="#ddd"></rect>
              <path d="M24 1c5 0 8 3 8 8M26 0l-3 2 3 2M30 7l2 3 2-3" fill="none" stroke="#bdbdbd" stroke-width="1.500"></path>
              <rect x="13" y="24" width="19" height="19" fill="#fff" stroke="#777"></rect>
              <rect x="19" y="30" width="7" height="7" fill="#666" stroke="#111" stroke-width="1.500"></rect>
              <rect x="3" y="14" width="18" height="18" fill="url(#fillg)" stroke="#ddd"></rect>
              <path d="M14 44L33 24" stroke="#e5252a" stroke-width="1.800"></path>
            </svg>
          </div>
          <div class="strip-sw">
            <svg width="36" height="11" viewBox="0 0 36 11">
              <rect x="4.500" y="1" width="8" height="9" fill="#f6efc8" stroke="#222"></rect>
              <rect x="13.500" y="1" width="8" height="9" fill="url(#stripg)" stroke="#222"></rect>
              <rect x="23.500" y="1" width="8" height="9" fill="#fff" stroke="#222"></rect>
              <path d="M24 10l7-9" stroke="#e5252a" stroke-width="1.300"></path>
            </svg>
          </div>
          <div class="mini first">${ic('drawMode')}</div>
          <div class="mini screen">${ic('screen')}</div>
          <div class="mini dots">${ic('more')}</div>
        </aside>

        <main class="doc">
          <div class="tabs soft">
            <div class="tab">
              <svg class="close" viewBox="0 0 10 10"><path d="M2 2l6 6M8 2l-6 6" stroke-width="1.200"></path></svg>
              Untitled-7* @ 50 % (RGB/Preview)
            </div>
          </div>
          <div class="rulerrow soft">
            <div class="corner"></div>
            <div class="hruler">${H_LABELS.map((n) => html`<div class="hcell">${n}</div>`)}</div>
            <div class="sb-corner"></div>
          </div>
          <div class="middle">
            <div class="vruler soft">
              <div class="vtrack">
                ${V_LABELS.map((n) => html`<div class="vcell">${String(n).split('').map((d) => html`<span>${d}</span>`)}</div>`)}
              </div>
            </div>
            <div class="canvas">
              <div class="artboard">
                <div class="circle c1"></div>
                <div class="circle c2"></div>
              </div>
            </div>
            <div class="vscroll">
              <div class="varrow top">${ic('chevU')}</div>
              <div class="thumb-v"></div>
              <div class="varrow bot">${ic('chevD')}</div>
            </div>
          </div>
          <div class="status soft">
            <div class="sf sf-zoom">50%</div>
            <div class="schv">${ic('chevD')}</div>
            <div class="sf sf-rot">0°</div>
            <div class="schv schv-2">${ic('chevD')}</div>
            <div class="snav snav-1">${ic('first')}</div>
            <div class="snav">${ic('prev')}</div>
            <div class="sf sf-page">1</div>
            <div class="schv schv-3">${ic('chevD')}</div>
            <div class="snav snav-2">${ic('triR')}</div>
            <div class="snav">${ic('last')}</div>
            <div class="hint">Toggle Direct Selection</div>
            <div class="stri">${ic('triR')}</div>
            <div class="hleft">${ic('chevL')}</div>
            <div class="hthumb"></div>
            <div class="hright">${ic('chevR')}</div>
          </div>
        </main>

        <div class="dock soft">
          <div class="dock-head">‹‹</div>
          ${DOCK.map((items) => html`
            <div class="group ${items.length > 3 ? 'tall' : ''}">
              <div class="grip"></div>
              ${items.map((name) => html`<div class="dk">${ic(name)}</div>`)}
            </div>
          `)}
        </div>

        <section class="panel soft">
          <div class="panel-head">››</div>
          <div class="ptabs">
            <div class="ptab pt-prop">Properties</div>
            <div class="ptab on pt-lay">Layers</div>
            <div class="ptab pt-lib">Libraries</div>
            <div class="pmenu">${ic('menu')}</div>
          </div>
          <div class="pbody">
            <div class="pbox-list">
              <div class="layer">
                <div class="leye">${ic('eye')}</div>
                <div class="ldiv ldiv-1"></div>
                <div class="lbar"></div>
                <div class="lchev">${ic('chevR')}</div>
                <div class="lthumb"><i></i><i></i></div>
                <div class="lname">Layer 1</div>
                <div class="ldiv"></div>
                <div class="ltarget">${ic('target')}</div>
              </div>
            </div>
            <div class="pfoot">
              <div class="pcount">1 Layer</div>
              <div class="fi first">${ic('export')}</div>
              <div class="fi off">${ic('search')}</div>
              <div class="fi">${ic('mask')}</div>
              <div class="fi wide">${ic('sublayer')}</div>
              <div class="fi">${ic('newLayer')}</div>
              <div class="fi off">${ic('trash')}</div>
            </div>
          </div>
        </section>
      </div>

      <div class="strip"><span>50%</span><span>2400 px x 3600 px (300 ppi)</span><span>7</span></div>
    `;
  }
}
